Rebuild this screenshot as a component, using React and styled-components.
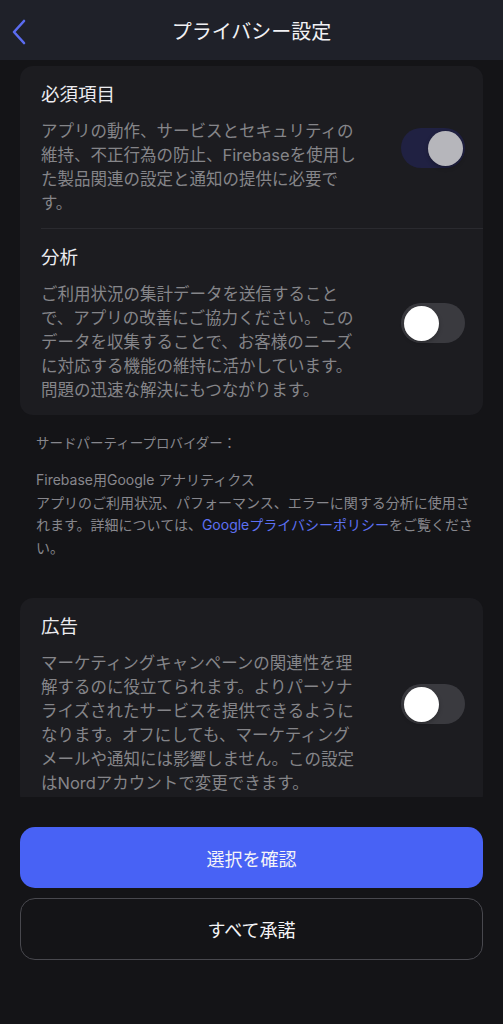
import React from 'react';
import styled, { createGlobalStyle } from 'styled-components';

const GlobalStyle = createGlobalStyle`
  html, body {
    margin: 0;
    padding: 0;
    background: #141417;
  }

  * {
    box-sizing: border-box;
  }
`;

const FONT = `Inter, "Noto Sans CJK JP", sans-serif`;

const Screen = styled.div`
  display: flex;
  flex-direction: column;
  height: 1024px;
  background: #141417;
  font-family: ${FONT};
  color: #ececf0;
`;

const TopBar = styled.header`
  position: relative;
  flex: 0 0 60px;
  display: flex;
  align-items: center;
  justify-content: center;
  background: #1f2129;
`;

const BackButton = styled.button`
  position: absolute;
  left: 6px;
  top: 16px;
  display: flex;
  padding: 2px 4px;
  background: none;
  border: 0;
`;

const Title = styled.h1`
  margin: 0;
  font-size: 20px;
  font-weight: 400;
  color: #f1f1f4;
`;

const Scroll = styled.main`
  flex: 1 1 auto;
  min-height: 0;
  overflow: hidden;
  padding: 6px 20px 0;
`;

const Card = styled.section`
  background: #1c1c20;
  border-radius: 13px;
`;

const Row = styled.div`
  display: flex;
  align-items: center;
  padding: 15px 18px 13px 21px;
`;

const Divider = styled.div`
  height: 1px;
  margin-left: 21px;
  background: #2a2a2f;
`;

const Info = styled.div`
  width: 322px;
  flex: 0 0 322px;
`;

const ItemTitle = styled.h2`
  margin: 0 0 12px;
  font-size: 18.5px;
  line-height: 26px;
  font-weight: 400;
  color: #ececf0;
`;

const ItemText = styled.p`
  margin: 0;
  font-size: 16.5px;
  line-height: 24px;
  color: #858589;
`;

const Track = styled.div`
  margin-left: auto;
  position: relative;
  width: 64px;
  height: 40px;
  border-radius: 20px;
  background: ${({ $on }) => ($on ? '#202142' : '#3a3a3f')};
`;

const Thumb = styled.span`
  position: absolute;
  top: 2.5px;
  left: ${({ $on }) => ($on ? '27px' : '2.5px')};
  width: 35px;
  height: 35px;
  border-radius: 50%;
  background: ${({ $on }) => ($on ? '#b6b6bb' : '#ffffff')};
  box-shadow: 0 2px 4px rgba(0, 0, 0, 0.25);
`;

const Providers = styled.div`
  padding: 18px 0 39px 16px;
  color: #87878d;
`;

const ProvidersLabel = styled.p`
  margin: 0 0 16px;
  font-size: 13.5px;
  line-height: 20px;
`;

const ProvidersText = styled.p`
  margin: 0;
  font-size: 14px;
  line-height: 22.5px;
  white-space: nowrap;
`;

const Link = styled.a`
  color: #5d70f2;
  text-decoration: none;
`;

const Footer = styled.footer`
  flex: 0 0 auto;
  display: flex;
  flex-direction: column;
  gap: 10px;
  padding: 30px 20px 64px;
`;

const Button = styled.button`
  height: ${({ $primary }) => ($primary ? 61 : 62)}px;
  border-radius: 15px;
  border: ${({ $primary }) => ($primary ? '0' : '1.5px solid #48484e')};
  background: ${({ $primary }) => ($primary ? '#4862f5' : 'transparent')};
  color: #f4f4f7;
  font-family: ${FONT};
  font-size: 18px;
  font-weight: 400;
`;

const Toggle = ({ on }) => (
  <Track $on={on}>
    <Thumb $on={on} />
  </Track>
);

const ChevronLeft = () => (
  <svg width="18" height="28" viewBox="0 0 18 28" fill="none">
    <path d="M14 3 L4 14 L14 25" stroke="#5b6cf0" strokeWidth="2.6" strokeLinecap="round" strokeLinejoin="round" />
  </svg>
);

const Setting = ({ title, children, on }) => (
  <Row>
    <Info>
      <ItemTitle>{title}</ItemTitle>
      <ItemText>{children}</ItemText>
    </Info>
    <Toggle on={on} />
  </Row>
);

export default function App() {
  return (
    <>
      <GlobalStyle />
      <Screen lang="ja">
        <TopBar>
          <BackButton aria-label="戻る">
            <ChevronLeft />
          </BackButton>
          <Title>プライバシー設定</Title>
        </TopBar>

        <Scroll>
          <Card>
            <Setting title="必須項目" on>
              アプリの動作、サービスとセキュリティの維持、不正行為の防止、Firebaseを使用した製品関連の設定と通知の提供に必要です。
            </Setting>
            <Divider />
            <Setting title="分析">
              ご利用状況の集計データを送信することで、アプリの改善にご協力ください。このデータを収集することで、お客様のニーズに対応する機能の維持に活かしています。問題の迅速な解決にもつながります。
            </Setting>
          </Card>

          <Providers>
            <ProvidersLabel>サードパーティープロバイダー：</ProvidersLabel>
            <ProvidersText>
              Firebase用Google アナリティクス
              <br />
              アプリのご利用状況、パフォーマンス、エラーに関する分析に使用さ
              <br />
              れます。詳細については、<Link href="#">Googleプライバシーポリシー</Link>をご覧くださ
              <br />
              い。
            </ProvidersText>
          </Providers>

          <Card>
            <Setting title="広告">
              マーケティングキャンペーンの関連性を理解するのに役立てられます。よりパーソナライズされたサービスを提供できるようになります。オフにしても、マーケティングメールや通知には影響しません。この設定はNordアカウントで変更できます。
            </Setting>
          </Card>
        </Scroll>

        <Footer>
          <Button $primary>選択を確認</Button>
          <Button>すべて承諾</Button>
        </Footer>
      </Screen>
    </>
  );
}
